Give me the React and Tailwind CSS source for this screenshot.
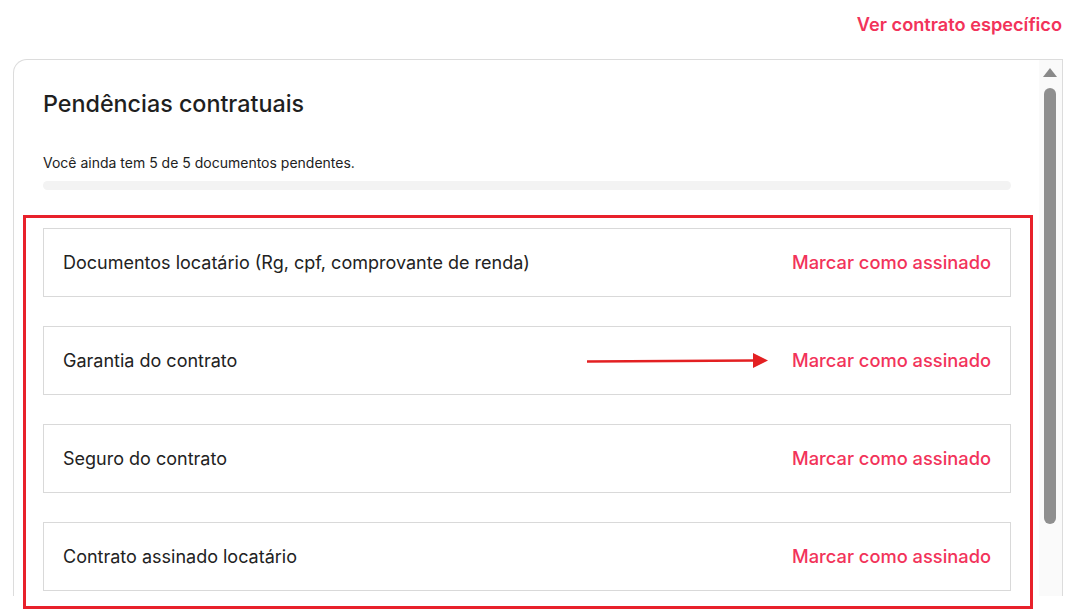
import { useMemo } from 'react';

const PENDING_DOCS = [
  { id: 'docs', label: 'Documentos locatário (Rg, cpf, comprovante de renda)' },
  { id: 'garantia', label: 'Garantia do contrato' },
  { id: 'seguro', label: 'Seguro do contrato' },
  { id: 'contrato', label: 'Contrato assinado locatário' }
];

function PendingRow({ label }) {
  return (
    <div className="flex h-[69px] shrink-0 items-center justify-between border border-[#d9d9d9] bg-white pl-[19px] pr-[19px]">
      <span className="text-[18px] text-[#222222]">{label}</span>
      <button type="button" className="text-[18.3px] font-medium text-[#f2335a]">
        Marcar como assinado
      </button>
    </div>
  );
}

function FakeScrollbar() {
  return (
    <div className="flex w-[23px] shrink-0 flex-col items-center bg-[#fafafa] pr-[1px]">
      <div className="mt-[8px] h-0 w-0 border-b-[9px] border-l-[7px] border-r-[7px] border-b-[#8a8a8a] border-l-transparent border-r-transparent" />
      <div className="mt-[11px] h-[436px] w-[12px] rounded-full bg-[#8f8f8f]" />
    </div>
  );
}

export default function App() {
  const total = 5;
  const pending = useMemo(() => 5, []);

  return (
    <div className="relative h-[611px] w-[1084px] overflow-hidden bg-white font-['Inter',sans-serif]">
      <div className="flex h-[59px] justify-end pr-[22px] pt-[11px]">
        <a className="text-[18.2px] font-semibold text-[#f2335a]">Ver contrato específico</a>
      </div>

      <div className="ml-[13px] flex h-[537px] w-[1050px] overflow-hidden rounded-tl-[14px] border border-b-0 border-[#dcdcdc]">
        <div className="flex flex-1 flex-col overflow-hidden pl-[29px] pr-[28px] pt-[29px]">
          <h2 className="text-[23.3px] font-medium leading-[30px] text-[#1f1f1f]">
            Pendências contratuais
          </h2>
          <p className="mt-[35px] text-[14px] leading-[18px] text-[#222222]">
            Você ainda tem {pending} de {total} documentos pendentes.
          </p>
          <div className="mt-[9px] h-[9px] w-full shrink-0 rounded-full bg-[#f3f3f3]" />

          <div className="mt-[38px] flex flex-col gap-[29px]">
            {PENDING_DOCS.map((doc) => (
              <PendingRow key={doc.id} label={doc.label} />
            ))}
          </div>
        </div>
        <FakeScrollbar />
      </div>

      {/* annotation: red highlight box */}
      <div className="pointer-events-none absolute left-[23px] top-[215px] h-[394px] w-[1010px] border-[3px] border-[#e8212b]" />

      {/* annotation: arrow */}
      <svg
        className="pointer-events-none absolute left-[585px] top-[350px]"
        width="186"
        height="22"
        viewBox="0 0 186 22"
      >
        <line x1="2" y1="11.5" x2="170" y2="10.5" stroke="#e32022" strokeWidth="2.5" />
        <polygon points="168,3 183,10.5 168,18" fill="#e32022" />
      </svg>
    </div>
  );
}
